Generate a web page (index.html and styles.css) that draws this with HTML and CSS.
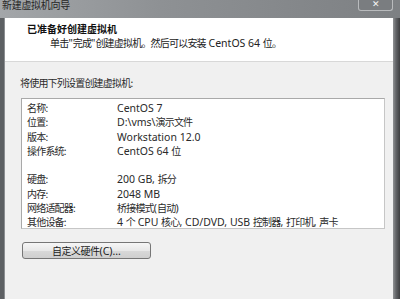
FILE: index.html
```html
<!DOCTYPE html>
<html lang="zh-CN">
<head>
    <meta charset="UTF-8">
    <title>新建虚拟机向导</title>
    <link rel="stylesheet" href="styles.css">
</head>
<body>
    <div class="window">
        <div class="titlebar">
            <span class="title">新建虚拟机向导</span>
            <span class="close-btn">✕</span>
        </div>
        <div class="frame">
            <div class="client">
                <div class="header">
                    <div class="header-title">已准备好创建虚拟机</div>
                    <div class="header-sub">单击<span class="en">"</span>完成<span class="en">"</span>创建虚拟机。然后可以安装<span class="en"> CentOS 64 </span>位。</div>
                </div>
                <div class="content">
                    <div class="intro">将使用下列设置创建虚拟机:</div>
                    <div class="settings">
                        <div class="row"><span class="label">名称:</span><span class="en">CentOS 7</span></div>
                        <div class="row"><span class="label">位置:</span><span><span class="en">D:\vms\</span>演示文件</span></div>
                        <div class="row"><span class="label">版本:</span><span class="en">Workstation 12.0</span></div>
                        <div class="row"><span class="label">操作系统:</span><span><span class="en">CentOS 64 </span>位</span></div>
                        <div class="row"></div>
                        <div class="row"><span class="label">硬盘:</span><span><span class="en">200 GB, </span>拆分</span></div>
                        <div class="row"><span class="label">内存:</span><span class="en">2048 MB</span></div>
                        <div class="row"><span class="label">网络适配器:</span><span>桥接模式<span class="en">(</span>自动<span class="en">)</span></span></div>
                        <div class="row"><span class="label">其他设备:</span><span><span class="en">4 </span>个<span class="en"> CPU </span>核心<span class="en">, CD/DVD, USB </span>控制器<span class="en">, </span>打印机<span class="en">, </span>声卡</span></div>
                    </div>
                    <button class="custom-btn">自定义硬件<span class="en">(C)...</span></button>
                </div>
            </div>
        </div>
    </div>
</body>
</html>
```

FILE: styles.css
```css
/* Page */
body {
    margin: 0;
    width: 400px;
    height: 299px;
    overflow: hidden;
    font-family: "Noto Sans CJK SC", "Noto Sans", sans-serif;
    font-size: 10px;
    letter-spacing: -0.8px;
    color: #2a2a2a;
    background: #6e7174;
}

/* Latin runs are a bit larger than the CJK glyphs */
.en {
    font-family: "Noto Sans", "Noto Sans CJK SC", sans-serif;
    font-size: 10.5px;
    letter-spacing: 0;
    line-height: 1;
}

.window {
    display: flex;
    flex-direction: column;
    height: 299px;
}

/* Title bar */
.titlebar {
    height: 18px;
    display: flex;
    justify-content: space-between;
    align-items: flex-start;
    background: linear-gradient(to right, #a3a6a9, #8e9194 40%, #7d8083);
}

.title {
    padding-left: 2px;
    line-height: 10px;
    letter-spacing: -0.3px;
    color: #262626;
}

.close-btn {
    width: 33px;
    height: 10px;
    margin-right: 7px;
    border: 1px solid #b9bbbd;
    border-top: none;
    border-radius: 0 0 3px 3px;
    background: #7a7d80;
    color: #f4f4f4;
    font-size: 9px;
    line-height: 8px;
    letter-spacing: 0;
    text-align: center;
}

/* Frame around the client area */
.frame {
    flex: 1;
    display: flex;
    padding-left: 5px;
    padding-right: 7px;
    background: linear-gradient(to right, #5d6063 0, #5d6063 4px, #8b8e91 4px, #8b8e91 5px, transparent 5px),
                linear-gradient(to left, #3d3e40 0, #626467 4px, #909294 7px, transparent 7px);
    background-color: #6e7174;
}

.client {
    flex: 1;
    display: flex;
    flex-direction: column;
    background: #f0f0f0;
}

/* Header */
.header {
    height: 44px;
    background: #ffffff;
    border-bottom: 1px solid #d8d8d8;
    box-sizing: border-box;
    padding-top: 4px;
}

.header-title {
    padding-left: 22px;
    font-weight: bold;
    line-height: 14px;
    letter-spacing: 0;
    color: #111;
}

.header-sub {
    padding-left: 45px;
    line-height: 13px;
    white-space: nowrap;
    color: #222;
}

/* Content */
.content {
    padding: 14px 8px 0 15px;
}

.intro {
    line-height: 14px;
    margin-bottom: 8px;
}

.settings {
    margin-left: 1px;
    height: 131px;
    box-sizing: border-box;
    background: #ffffff;
    border: 1px solid #a9a9a9;
    border-right-color: #c6c6c6;
    border-bottom-color: #c6c6c6;
    padding: 2px 5px 0;
}

.row {
    display: flex;
    align-items: baseline;
    height: 14.3px;
    line-height: 14.3px;
    white-space: nowrap;
}

.label {
    width: 90px;
    flex-shrink: 0;
}

/* Button */
.custom-btn {
    margin-top: 13px;
    margin-left: 2px;
    width: 129px;
    height: 17px;
    padding: 0;
    font-family: inherit;
    font-size: 10px;
    line-height: 14px;
    letter-spacing: -0.5px;
    color: #1a1a1a;
    border: 1px solid #767676;
    border-radius: 3px;
    background: linear-gradient(to bottom, #f6f6f6, #e8e8e8 50%, #d9d9d9 51%, #cfcfcf);
}
```
